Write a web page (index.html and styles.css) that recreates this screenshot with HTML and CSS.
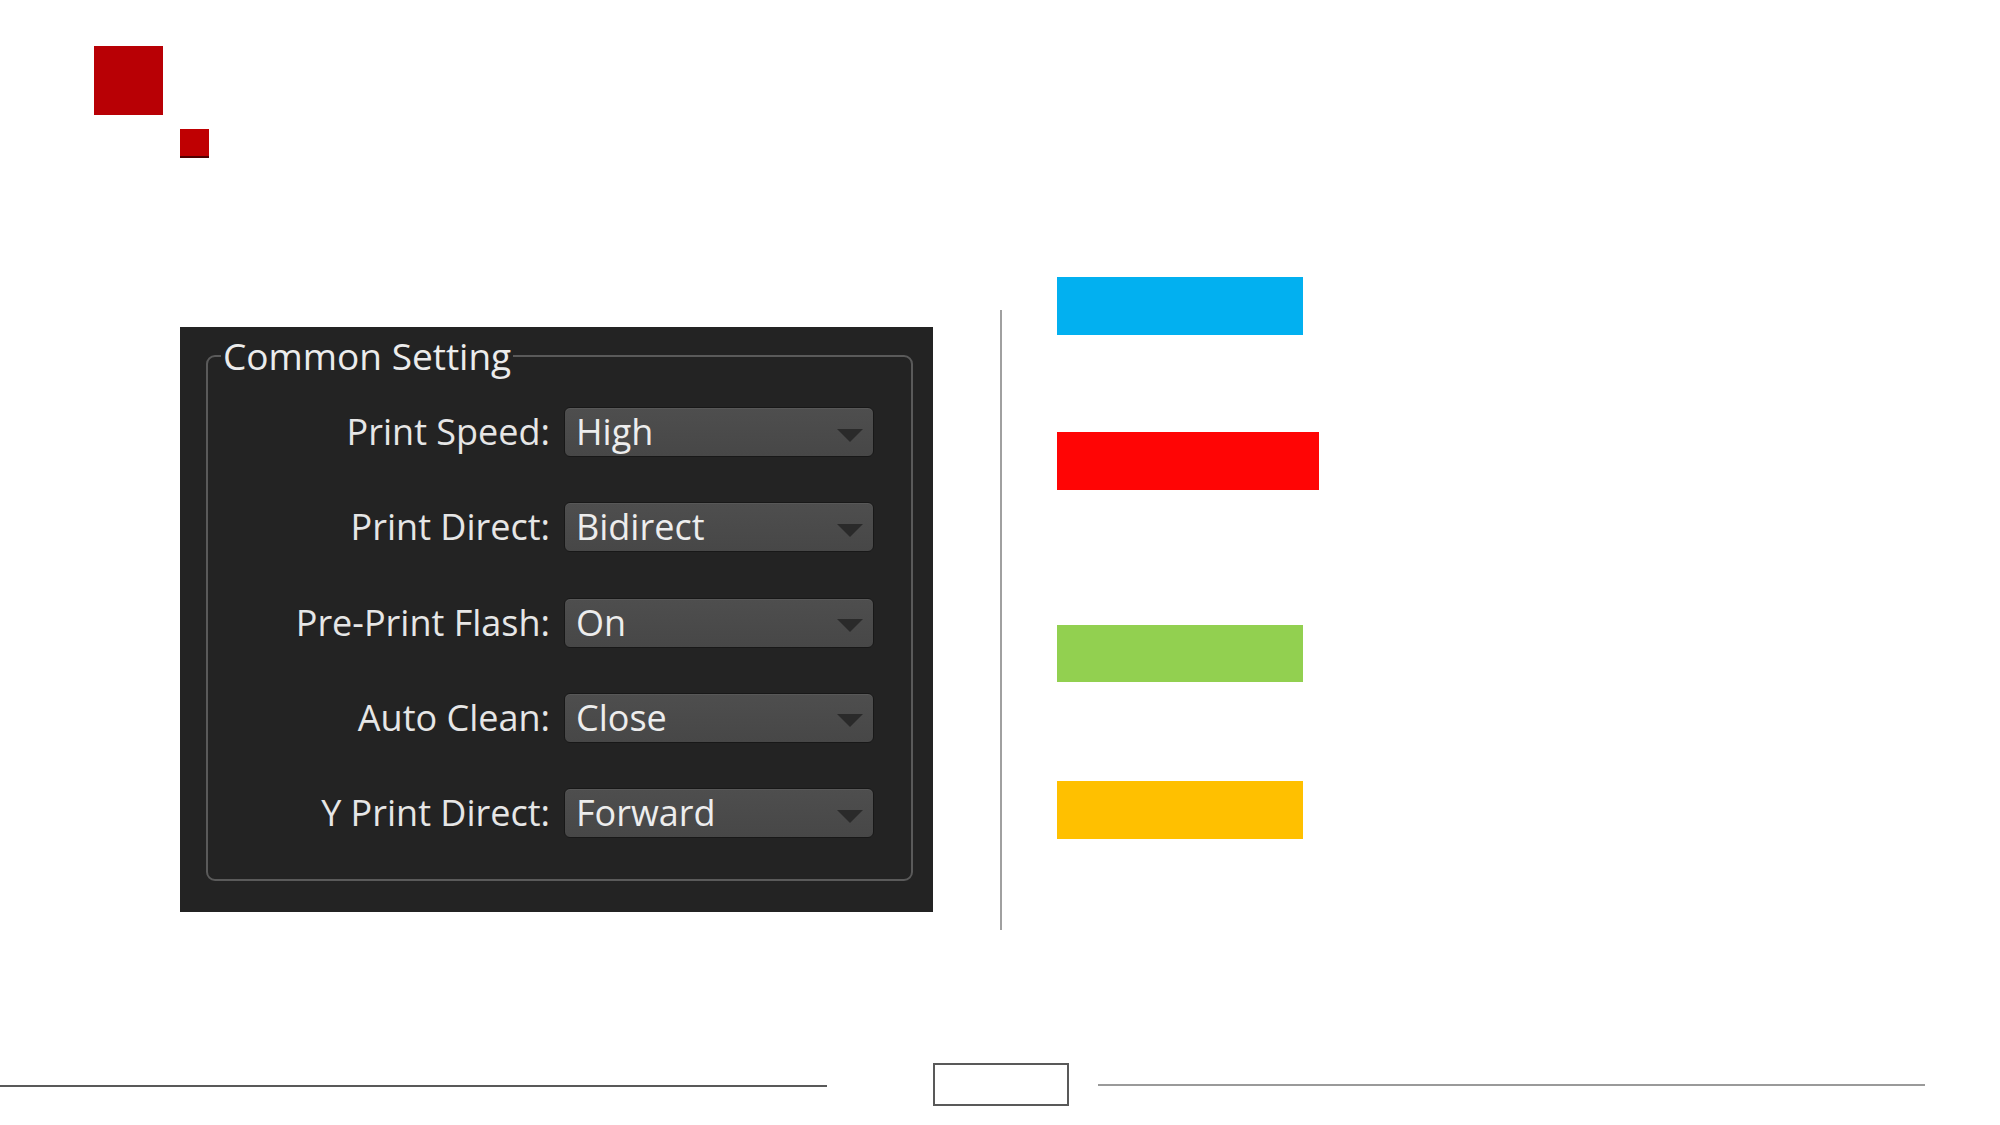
FILE: index.html
```html
<!DOCTYPE html>
<html lang="en">
<head>
<meta charset="utf-8">
<title>Common Setting</title>
<link rel="stylesheet" href="styles.css">
</head>
<body>
<div class="slide">
  <header class="header">
    <div class="mark-big"></div>
    <div class="mark-small"></div>
  </header>

  <main class="content">
    <section class="panel">
      <fieldset class="group">
        <legend class="group-title">Common Setting</legend>
        <div class="form">
          <label class="label">Print Speed:</label>
          <div class="combo"><span class="combo-text">High</span><svg class="arrow" width="26" height="13" viewBox="0 0 26 13"><polygon points="0,0 26,0 13,13" /></svg></div>

          <label class="label">Print Direct:</label>
          <div class="combo"><span class="combo-text">Bidirect</span><svg class="arrow" width="26" height="13" viewBox="0 0 26 13"><polygon points="0,0 26,0 13,13" /></svg></div>

          <label class="label">Pre-Print Flash:</label>
          <div class="combo"><span class="combo-text">On</span><svg class="arrow" width="26" height="13" viewBox="0 0 26 13"><polygon points="0,0 26,0 13,13" /></svg></div>

          <label class="label">Auto Clean:</label>
          <div class="combo"><span class="combo-text">Close</span><svg class="arrow" width="26" height="13" viewBox="0 0 26 13"><polygon points="0,0 26,0 13,13" /></svg></div>

          <label class="label">Y Print Direct:</label>
          <div class="combo"><span class="combo-text">Forward</span><svg class="arrow" width="26" height="13" viewBox="0 0 26 13"><polygon points="0,0 26,0 13,13" /></svg></div>
        </div>
      </fieldset>
    </section>

    <div class="divider"></div>

    <div class="bars">
      <div class="bar bar-blue"></div>
      <div class="bar bar-red"></div>
      <div class="bar bar-green"></div>
      <div class="bar bar-yellow"></div>
    </div>
  </main>

  <footer class="footer">
    <div class="rule rule-left"></div>
    <div class="page-box"></div>
    <div class="rule rule-right"></div>
  </footer>
</div>
</body>
</html>
```

FILE: styles.css
```css
html, body {
  margin: 0;
  padding: 0;
  background: #ffffff;
}

.slide {
  width: 2000px;
  height: 1125px;
  display: flex;
  flex-direction: column;
  overflow: hidden;
  font-family: "Open Sans", "Noto Sans", sans-serif;
}

/* header marks */
.header {
  padding: 46px 0 0 94px;
  display: flex;
  flex-direction: column;
}
.mark-big {
  width: 69px;
  height: 69px;
  background: #b80005;
}
.mark-small {
  width: 29px;
  height: 27px;
  margin: 14px 0 0 86px;
  background: #bf0002;
  border-bottom: 2px solid #4e0000;
}

/* main content */
.content {
  display: flex;
  align-items: flex-start;
  margin-top: 119px;
}

.panel {
  margin: 50px 0 0 180px;
  width: 753px;
  height: 585px;
  box-sizing: border-box;
  background: #232323;
  padding: 7px 20px 0 26px;
}

.group {
  margin: 0;
  padding: 0 0 41px 0;
  border: 2px solid #5a5a5a;
  border-radius: 9px;
  min-width: 0;
}
.group-title {
  margin-left: 13px;
  padding: 0 2px;
  font-size: 37px;
  line-height: 44px;
  color: #ececec;
}

.form {
  display: grid;
  grid-template-columns: 342px 310px;
  grid-auto-rows: 50px;
  column-gap: 14px;
  row-gap: 45.25px;
  padding-top: 29px;
}

.label {
  font-size: 36px;
  line-height: 50px;
  color: #e6e6e6;
  text-align: right;
  white-space: nowrap;
}

.combo {
  box-sizing: border-box;
  height: 50px;
  display: flex;
  align-items: center;
  justify-content: space-between;
  padding: 0 10px 0 11px;
  background: linear-gradient(#4e4e4e, #474747);
  border: 1px solid #181818;
  border-radius: 6px;
  box-shadow: inset 0 1px 0 rgba(255, 255, 255, 0.06);
}
.combo-text {
  font-size: 36px;
  line-height: 48px;
  color: #ededed;
}
.arrow {
  margin-top: 6px;
  fill: #2a2a2a;
}

.divider {
  width: 2px;
  height: 620px;
  margin: 33px 0 0 67px;
  background: #a0a0a0;
}

.bars {
  margin-left: 55px;
  display: flex;
  flex-direction: column;
  align-items: flex-start;
}
.bar {
  width: 246px;
  height: 58px;
}
.bar-blue {
  background: #02b0f0;
}
.bar-red {
  width: 262px;
  margin-top: 97px;
  background: #ff0505;
}
.bar-green {
  height: 57px;
  margin-top: 135px;
  background: #92d050;
}
.bar-yellow {
  margin-top: 99px;
  background: #ffc000;
}

/* footer */
.footer {
  margin-top: 133px;
  display: flex;
  align-items: center;
}
.rule {
  width: 827px;
}
.rule-left {
  height: 2px;
  margin-top: 2px;
  background: #595959;
}
.rule-right {
  height: 2px;
  background: #9a9a9a;
  margin-left: 29px;
}
.page-box {
  box-sizing: border-box;
  width: 136px;
  height: 43px;
  margin-left: 106px;
  border: 2px solid #595959;
}
```
